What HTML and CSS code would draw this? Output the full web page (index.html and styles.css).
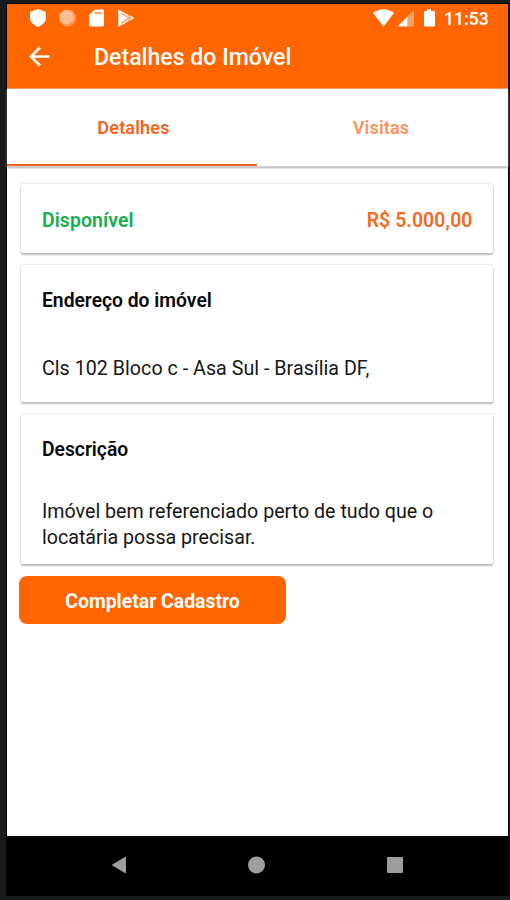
FILE: index.html
```html
<!DOCTYPE html>
<html lang="pt-BR">
<head>
<meta charset="utf-8">
<title>Detalhes do Imóvel</title>
<link rel="stylesheet" href="styles.css">
</head>
<body>
<div class="phone">
  <header class="header">
    <div class="status">
      <svg class="status-left" width="106" height="22" viewBox="0 0 106 22" fill="#fff">
        <path d="M8 5l8 3v6c0 4-3.500 7-8 9-4.500-2-8-5-8-9V8z"/>
        <circle cx="37.500" cy="14" r="8.500" opacity=".35"/>
        <circle cx="36.500" cy="13" r="7" opacity=".35"/>
        <path d="M65 5.500h7.500q1.500 0 1.500 1.500v14q0 1.500-1.500 1.500H60.500Q59 22.500 59 21V11z"/>
        <path d="M64.500 9h7.500" stroke="#ff6500" stroke-width="1.600" opacity=".7"/>
        <path d="M88.500 6L104 14l-15.500 8.500z" stroke="#fff" stroke-width=".5" stroke-linejoin="round"/>
        <path d="M91 9l8 5-8 5.500M98 10.500l2.500 3.500-2.500 3.500" fill="none" stroke="#ff6500" stroke-width="1.100" opacity=".7"/>
      </svg>
      <svg class="status-right" width="64" height="22" viewBox="0 0 64 22" fill="#fff">
        <path d="M0 9Q10.500 1.500 21 9L10.500 22.500z"/>
        <path d="M34.500 12.500L41 6v16.500h-6.500z" opacity=".4"/>
        <path d="M24.500 22.500L34.500 12.500v10z"/>
        <path d="M54 5h4v2h3q1 0 1 1v13.500q0 1-1 1H52q-1 0-1-1V8q0-1 1-1h2z"/>
      </svg>
      <span class="clock">11:53</span>
    </div>
    <div class="titlebar">
      <svg class="back" width="22" height="22" viewBox="0 0 22 22" fill="none" stroke="#fff" stroke-width="2.600"><path d="M20.500 10.500H2.500M11 1.500l-9 9 9 9"/></svg>
      <h1 class="title">Detalhes do Imóvel</h1>
    </div>
  </header>
  <nav class="tabs">
    <div class="tab active">Detalhes</div>
    <div class="tab">Visitas</div>
  </nav>
  <main class="content">
    <section class="card summary"><span class="available">Disponível</span><span class="price">R$ 5.000,00</span></section>
    <section class="card address">
      <h2>Endereço do imóvel</h2>
      <p class="street">Cls 102 Bloco c - Asa Sul - Brasília DF,</p>
    </section>
    <section class="card description">
      <h2>Descrição</h2>
      <p class="desc">Imóvel bem referenciado perto de tudo que o<br>locatária possa precisar.</p>
    </section>
    <button class="action">Completar Cadastro</button>
  </main>
  <footer class="navbar">
    <svg width="501" height="59" viewBox="0 0 501 59" fill="#9e9e9e">
      <path d="M104.500 29L118 21q1-.5 1 .5v15q0 1-1 .5z"/>
      <circle cx="249.500" cy="29" r="8.500"/>
      <rect x="380" y="21" width="16" height="16" rx="1"/>
    </svg>
  </footer>
</div>
</body>
</html>
```
FILE: styles.css
```css
* { box-sizing: border-box; }
body {
  margin: 0;
  width: 510px;
  height: 900px;
  padding: 4px 2px 5px 7px;
  background: #181a1b;
  font-family: Roboto, sans-serif;
  overflow: hidden;
}
.phone { width: 501px; height: 891px; display: flex; flex-direction: column; background: #fff; box-shadow: 0 0 0 1px #000; }
.header { height: 85px; background: #ff6500; color: #fff; flex: none; border-bottom: 1px solid #ff9a5c; }
.status { display: flex; height: 28px; }
.status svg { overflow: visible; flex: none; }
.status-left { margin-left: 23px; }
.status-right { margin-left: 237px; }
.clock { margin-left: 7px; font-size: 17.5px; font-weight: 600; line-height: 30px; }
.titlebar { display: flex; align-items: center; height: 50px; }
.back { margin-left: 22px; }
.title { margin: 1px 0 0 43px; padding-top: 1px; font-size: 23.1px; line-height: 30px; font-weight: 500; white-space: nowrap; }
.tabs { display: flex; height: 78px; flex: none; border-bottom: 1px solid #d4d4d4; box-shadow: 0 1px 2px #aaa; }
.tab { flex: 1; padding: 1px 3px 0 0; text-align: center; line-height: 75px; font-size: 18.1px; font-weight: 600; letter-spacing: .15px; color: #ff935a; }
.active { flex: none; width: 250px; padding-right: 0; padding-left: 3px; color: #f4661f; border-bottom: 2px solid #f26322; }
.content { flex: 1; padding: 17px 15px 0 14px; }
.card { border-radius: 2px; background: #fff; box-shadow: 0 0 2px #bbb, 0 2px 2px #bbb; color: #161616; padding: 0 21px; }
.summary { display: flex; justify-content: space-between; height: 69px; line-height: 73px; font-size: 19.4px; font-weight: 600; }
.available { color: #17ae4e; letter-spacing: .1px; }
.price { color: #f46a1e; letter-spacing: .1px; margin-right: -.5px; }
.address { height: 137px; margin-top: 12px; }
.description { height: 150px; margin-top: 12px; }
h2 { margin: 0; padding-top: 23px; font-size: 19.3px; line-height: 26px; font-weight: 600; color: #080808; }
p { margin: 0; font-size: 19.65px; line-height: 26px; white-space: nowrap; }
.street { padding-top: 42px; letter-spacing: .03px; }
.desc { padding-top: 36px; }
.action { display: block; width: 267px; height: 48px; margin: 12px 0 0 -2px; padding: 2px 0 0; border: 0; border-radius: 8px; background: #ff6500; color: #fff; font: 700 19.4px Roboto, sans-serif; }
.navbar { height: 59px; flex: none; background: #000; }
.navbar svg { display: block; }
```
